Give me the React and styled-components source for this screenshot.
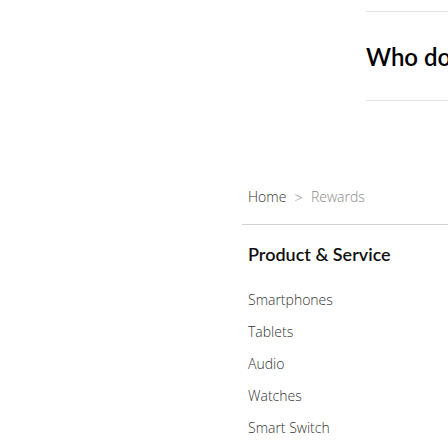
import React from 'react'
import styled, { createGlobalStyle } from 'styled-components'

const Global = createGlobalStyle`
  body {
    margin: 0;
    background: #fff;
    font-family: "Open Sans", "Liberation Sans", sans-serif;
  }
`

const items = ['Smartphones', 'Tablets', 'Audio', 'Watches', 'Smart Switch']

export default function App() {
  return <Page>
    <Global />
    <Hero>
      <HeroTitle>Who do</HeroTitle>
    </Hero>
    <Crumbs>
      <Crumb>Home</Crumb>
      <Sep>&gt;</Sep>
      <Crumb muted>Rewards</Crumb>
    </Crumbs>
    <Menu>
      <MenuTitle>Product &amp; Service</MenuTitle>
      <List>
        {items.map(i => <Item key={i}>{i}</Item>)}
      </List>
    </Menu>
  </Page>
}

const Page = styled.div`
  width: 448px;
  height: 448px;
  overflow: hidden;
  padding-top: 11px;
  box-sizing: border-box;
`

const Hero = styled.div`
  margin-left: 366px;
  height: 88px;
  border-top: 1px solid #e4e4e4;
  border-bottom: 1px solid #e4e4e4;
  display: flex;
  align-items: center;
  white-space: nowrap;
`

const HeroTitle = styled.h1`
  margin: 0;
  font-family: Lato, "Open Sans", sans-serif;
  font-size: 24px;
  font-weight: 600;
  color: #000;
`

const Crumbs = styled.div`
  margin: 85px 0 0 242px;
  padding: 0 0 16px 6px;
  border-bottom: 1px solid #d2d2d2;
  display: flex;
  align-items: center;
  gap: 8px;
  font-size: 14px;
  line-height: 22px;
  font-weight: 300;
`

const Crumb = styled.span`
  color: ${p => p.muted ? '#8a8a8a' : '#333'};
`

const Sep = styled.span`
  color: #999;
  font-size: 15px;
`

const Menu = styled.div`
  margin-left: 248px;
  padding-top: 17px;
`

const MenuTitle = styled.h2`
  margin: 0;
  font-family: Lato, "Open Sans", sans-serif;
  font-size: 18px;
  line-height: 24px;
  font-weight: 600;
  color: #111;
`

const List = styled.ul`
  list-style: none;
  margin: 18px 0 0;
  padding: 0;
`

const Item = styled.li`
  font-size: 14px;
  line-height: 32px;
  font-weight: 300;
  color: #333;
`
